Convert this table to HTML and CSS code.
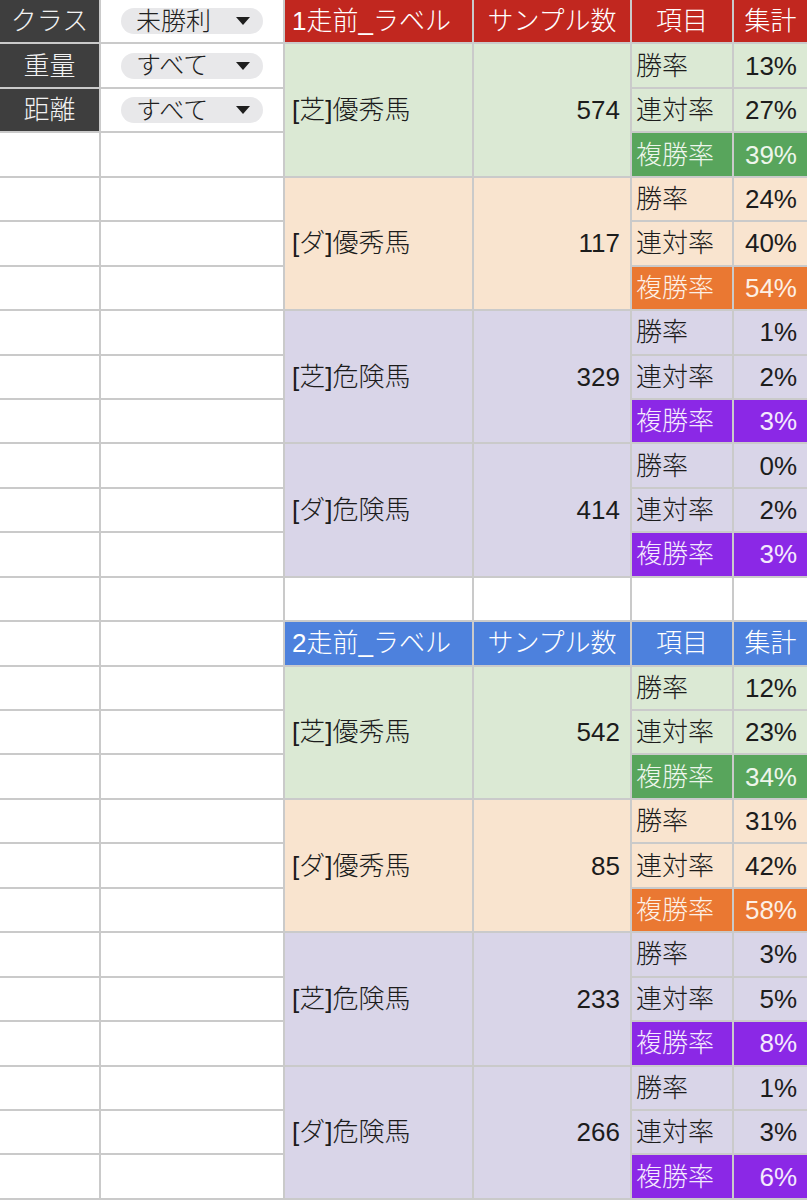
FILE: index.html
```html
<!DOCTYPE html>
<html lang="ja">
<head>
    <meta charset="UTF-8">
    <meta name="viewport" content="width=device-width, initial-scale=1.0">
    <title>ラベル集計</title>
    <link rel="stylesheet" href="styles.css">
</head>
<body>
    <div class="sheet">
        <!-- row 1 -->
        <div class="cell key">クラス</div>
        <div class="cell"><span class="pill">未勝利<i class="caret"></i></span></div>
        <div class="cell head red">1走前_ラベル</div>
        <div class="cell head red mid">サンプル数</div>
        <div class="cell head red mid">項目</div>
        <div class="cell head red mid">集計</div>

        <!-- block 1: 芝 優秀馬 -->
        <div class="cell key">重量</div>
        <div class="cell"><span class="pill">すべて<i class="caret"></i></span></div>
        <div class="cell name green span3">[芝]優秀馬</div>
        <div class="cell num green span3">574</div>
        <div class="cell item green">勝率</div>
        <div class="cell num green">13%</div>
        <div class="cell key">距離</div>
        <div class="cell"><span class="pill">すべて<i class="caret"></i></span></div>
        <div class="cell item green">連対率</div>
        <div class="cell num green">27%</div>
        <div class="cell"></div>
        <div class="cell"></div>
        <div class="cell item green-hi">複勝率</div>
        <div class="cell num green-hi">39%</div>

        <!-- block 2: ダ 優秀馬 -->
        <div class="cell"></div>
        <div class="cell"></div>
        <div class="cell name orange span3">[ダ]優秀馬</div>
        <div class="cell num orange span3">117</div>
        <div class="cell item orange">勝率</div>
        <div class="cell num orange">24%</div>
        <div class="cell"></div>
        <div class="cell"></div>
        <div class="cell item orange">連対率</div>
        <div class="cell num orange">40%</div>
        <div class="cell"></div>
        <div class="cell"></div>
        <div class="cell item orange-hi">複勝率</div>
        <div class="cell num orange-hi">54%</div>

        <!-- block 3: 芝 危険馬 -->
        <div class="cell"></div>
        <div class="cell"></div>
        <div class="cell name purple span3">[芝]危険馬</div>
        <div class="cell num purple span3">329</div>
        <div class="cell item purple">勝率</div>
        <div class="cell num purple">1%</div>
        <div class="cell"></div>
        <div class="cell"></div>
        <div class="cell item purple">連対率</div>
        <div class="cell num purple">2%</div>
        <div class="cell"></div>
        <div class="cell"></div>
        <div class="cell item purple-hi">複勝率</div>
        <div class="cell num purple-hi">3%</div>

        <!-- block 4: ダ 危険馬 -->
        <div class="cell"></div>
        <div class="cell"></div>
        <div class="cell name purple span3">[ダ]危険馬</div>
        <div class="cell num purple span3">414</div>
        <div class="cell item purple">勝率</div>
        <div class="cell num purple">0%</div>
        <div class="cell"></div>
        <div class="cell"></div>
        <div class="cell item purple">連対率</div>
        <div class="cell num purple">2%</div>
        <div class="cell"></div>
        <div class="cell"></div>
        <div class="cell item purple-hi">複勝率</div>
        <div class="cell num purple-hi">3%</div>

        <!-- empty row -->
        <div class="cell"></div>
        <div class="cell"></div>
        <div class="cell"></div>
        <div class="cell"></div>
        <div class="cell"></div>
        <div class="cell"></div>

        <!-- second table header -->
        <div class="cell"></div>
        <div class="cell"></div>
        <div class="cell head blue">2走前_ラベル</div>
        <div class="cell head blue mid">サンプル数</div>
        <div class="cell head blue mid">項目</div>
        <div class="cell head blue mid">集計</div>

        <div class="cell"></div>
        <div class="cell"></div>
        <div class="cell name green span3">[芝]優秀馬</div>
        <div class="cell num green span3">542</div>
        <div class="cell item green">勝率</div>
        <div class="cell num green">12%</div>
        <div class="cell"></div>
        <div class="cell"></div>
        <div class="cell item green">連対率</div>
        <div class="cell num green">23%</div>
        <div class="cell"></div>
        <div class="cell"></div>
        <div class="cell item green-hi">複勝率</div>
        <div class="cell num green-hi">34%</div>

        <div class="cell"></div>
        <div class="cell"></div>
        <div class="cell name orange span3">[ダ]優秀馬</div>
        <div class="cell num orange span3">85</div>
        <div class="cell item orange">勝率</div>
        <div class="cell num orange">31%</div>
        <div class="cell"></div>
        <div class="cell"></div>
        <div class="cell item orange">連対率</div>
        <div class="cell num orange">42%</div>
        <div class="cell"></div>
        <div class="cell"></div>
        <div class="cell item orange-hi">複勝率</div>
        <div class="cell num orange-hi">58%</div>

        <div class="cell"></div>
        <div class="cell"></div>
        <div class="cell name purple span3">[芝]危険馬</div>
        <div class="cell num purple span3">233</div>
        <div class="cell item purple">勝率</div>
        <div class="cell num purple">3%</div>
        <div class="cell"></div>
        <div class="cell"></div>
        <div class="cell item purple">連対率</div>
        <div class="cell num purple">5%</div>
        <div class="cell"></div>
        <div class="cell"></div>
        <div class="cell item purple-hi">複勝率</div>
        <div class="cell num purple-hi">8%</div>

        <div class="cell"></div>
        <div class="cell"></div>
        <div class="cell name purple span3">[ダ]危険馬</div>
        <div class="cell num purple span3">266</div>
        <div class="cell item purple">勝率</div>
        <div class="cell num purple">1%</div>
        <div class="cell"></div>
        <div class="cell"></div>
        <div class="cell item purple">連対率</div>
        <div class="cell num purple">3%</div>
        <div class="cell"></div>
        <div class="cell"></div>
        <div class="cell item purple-hi">複勝率</div>
        <div class="cell num purple-hi">6%</div>
    </div>
</body>
</html>
```

FILE: styles.css
```css
body {
    margin: 0;
    background: #ffffff;
    font-family: "Liberation Sans", "Noto Sans CJK JP", sans-serif;
    font-size: 26px;
    font-weight: 300;
    color: #1c1c1c;
}
.sheet {
    width: 807px;
    height: 1200px;
    display: grid;
    grid-template-columns: 99px 182px 187px 156px 100px 73px;
    grid-template-rows: repeat(27, 42.44px);
    gap: 2px;
    padding-bottom: 2px;
    box-sizing: border-box;
    background-color: #cacaca;
    overflow: hidden;
}
.cell {
    background-color: #ffffff;
    display: flex;
    align-items: center;
    padding: 0 7px;
    white-space: nowrap;
    overflow: hidden;
    line-height: 1;
}
.span3 {
    grid-row: span 3;
}
.key {
    background-color: #3e3e3e;
    color: #f2f2f2;
    justify-content: center;
}
.pill {
    width: 142px;
    height: 26px;
    margin: 0 auto;
    padding: 0 13px 0 15px;
    box-sizing: border-box;
    display: flex;
    align-items: center;
    justify-content: space-between;
    background-color: #e8e8ea;
    border-radius: 13px;
    color: #202020;
    font-size: 25px;
}
.caret {
    width: 0;
    height: 0;
    border-left: 7px solid transparent;
    border-right: 7px solid transparent;
    border-top: 8px solid #1e1e1e;
}
.head {
    color: #ffffff;
}
.mid {
    justify-content: center;
}
.red {
    background-color: #c1271f;
}
.blue {
    background-color: #4d81dd;
}
.item {
    padding-left: 4px;
}
.num {
    justify-content: flex-end;
    padding-right: 10px;
}
.green {
    background-color: #dbe9d4;
}
.orange {
    background-color: #f9e4cf;
}
.purple {
    background-color: #d9d5e8;
}
.green-hi {
    background-color: #58a55c;
    color: #eef6ec;
}
.orange-hi {
    background-color: #ea7832;
    color: #fdf0e6;
}
.purple-hi {
    background-color: #8b28e6;
    color: #f4eafd;
}
```
